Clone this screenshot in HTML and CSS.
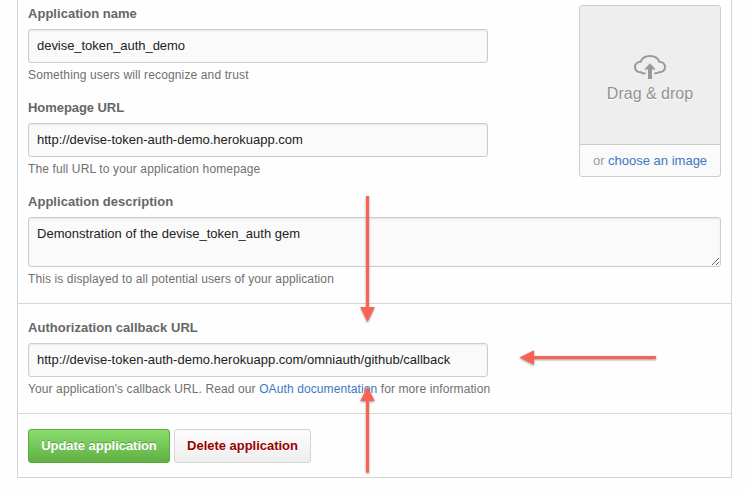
FILE: index.html
```html
<!DOCTYPE html>
<html lang="en">
<head>
<meta charset="utf-8">
<title>Application settings</title>
<link rel="stylesheet" href="styles.css">
</head>
<body>
<form class="panel">
  <section class="section details">
    <div class="top">
      <div class="fields">
        <div class="field">
          <label class="label label-name" for="name">Application name</label>
          <input class="control input-name" id="name" type="text" value="devise_token_auth_demo">
          <p class="hint hint-name">Something users will recognize and trust</p>
        </div>
        <div class="field">
          <label class="label label-home" for="home">Homepage URL</label>
          <input class="control input-home" id="home" type="text" value="http://devise-token-auth-demo.herokuapp.com">
          <p class="hint hint-home">The full URL to your application homepage</p>
        </div>
      </div>
      <div class="uploader">
        <div class="dropzone">
          <svg class="cloud" width="34" height="26" viewBox="0 0 34 26">
            <path d="M12.300 18.800C11 20 9.200 19.500 8.300 18.200C4.500 18.700 2 16.300 2 13C2 9.800 4.500 7.700 7.700 7.700C9 4.300 12.500 2 17 2C21.500 2 25 4.300 26.300 7.700C29.500 7.700 32 9.800 32 13C32 16.300 29.500 18.700 25.700 18.200C24.500 19.200 23 19.500 21.300 19.300" fill="none" stroke="#999" stroke-width="2"/>
            <path d="M17 9.300L22.800 15.500H19V25H15V15.500H11.200Z" fill="#999"/>
          </svg>
          <span class="drop-text">Drag &amp; drop</span>
        </div>
        <div class="choose"><span class="choose-text">or <a href="#">choose an image</a></span></div>
      </div>
    </div>
    <div class="field">
      <label class="label label-desc" for="desc">Application description</label>
      <textarea class="control input-desc" id="desc">Demonstration of the devise_token_auth gem</textarea>
      <p class="hint hint-desc">This is displayed to all potential users of your application</p>
    </div>
  </section>
  <section class="section callback">
    <div class="field">
      <label class="label label-callback" for="callback">Authorization callback URL</label>
      <input class="control input-callback" id="callback" type="text" value="http://devise-token-auth-demo.herokuapp.com/omniauth/github/callback">
      <p class="hint hint-callback">Your application's callback URL. Read our <a href="#">OAuth documentation</a> for more information</p>
    </div>
  </section>
  <div class="actions">
    <button class="button primary" type="button">Update application</button>
    <button class="button danger" type="button">Delete application</button>
  </div>
</form>
<svg class="arrows" width="747" height="491" viewBox="0 0 747 491">
  <path d="M366 196H369V307H374.700L367.500 322L360.300 307H366Z"/>
  <path d="M366 472.500H369V401H374.700L367.500 386.500L360.300 401H366Z"/>
  <path d="M656 356V359H534V364.700L519.500 357.500L534 350.300V356Z"/>
</svg>
</body>
</html>
```
FILE: styles.css
```css
* {
  box-sizing: border-box;
}

body {
  margin: 0;
  height: 491px;
  overflow: hidden;
  background: #fefefe;
  font-family: "Liberation Sans", Arial, sans-serif;
  font-size: 13px;
  color: #666;
}

a {
  color: #3c78c3;
  text-decoration: none;
}

.panel {
  width: 715px;
  height: 478px;
  margin-left: 17px;
  border: 1px solid #d4d4d4;
  border-top: 0;
}

.section {
  padding: 0 10px;
  border-bottom: 1px solid #d8d8d8;
}

.details {
  height: 304px;
  padding-top: 5px;
}

.callback {
  height: 110px;
  padding-top: 15px;
}

.top {
  display: flex;
  justify-content: space-between;
  height: 188px;
}

.fields {
  width: 460px;
}

.field {
  height: 94px;
}

.label {
  display: block;
  height: 24px;
  line-height: 18px;
  font-weight: bold;
  letter-spacing: 0.03px;
  white-space: nowrap;
}

.label-home {
  letter-spacing: -0.06px;
}

.control {
  display: block;
  width: 460px;
  height: 34px;
  margin: 0;
  padding: 0 8px 2px;
  border: 1px solid #ccc;
  border-radius: 3px;
  background: #fafafa;
  box-shadow: inset 0 1px 2px rgba(0, 0, 0, 0.075);
  color: #222;
  font: 13px "Liberation Sans", Arial, sans-serif;
  outline: none;
}

.input-name {
  letter-spacing: -0.04px;
}

.input-callback {
  letter-spacing: 0.01px;
}

.input-desc {
  width: 693px;
  height: 50px;
  padding-top: 7px;
  line-height: 18px;
  letter-spacing: 0.02px;
}

.hint {
  margin: 3px 0 0;
  font-size: 12px;
  line-height: 18px;
  letter-spacing: 0.107px;
  color: #707070;
  white-space: nowrap;
}

.hint-name,
.hint-home {
  letter-spacing: 0.13px;
}

.uploader {
  width: 142px;
  height: 172px;
  border: 1px solid #ccc;
  border-radius: 3px;
  background: #fafafa;
  overflow: hidden;
  text-align: center;
}

.dropzone {
  display: flex;
  flex-direction: column;
  align-items: center;
  height: 139px;
  padding-top: 48px;
  background: #eee;
  border-bottom: 1px solid #ccc;
  color: #939393;
  text-shadow: 0 1px 0 #fff;
}

.cloud {
  flex: none;
}

.drop-text {
  margin-top: 4px;
  font-size: 16px;
  line-height: 20px;
}

.choose {
  line-height: 32px;
  color: #999;
}

.actions {
  display: flex;
  gap: 4px;
  padding: 15px 10px;
}

.button {
  height: 34px;
  padding: 0 0 1px;
  border: 1px solid #d5d5d5;
  border-radius: 3px;
  font: bold 13px "Liberation Sans", Arial, sans-serif;
  white-space: nowrap;
}

.primary {
  width: 142px;
  border-color: #5ca941;
  background: linear-gradient(#8add6d, #60b044);
  color: #fff;
  letter-spacing: -0.04px;
  text-shadow: 0 -1px 0 rgba(0, 0, 0, 0.25);
}

.danger {
  width: 137px;
  background: linear-gradient(#fcfcfc, #eee);
  color: #900;
  letter-spacing: -0.02px;
  text-shadow: 0 1px 0 rgba(255, 255, 255, 0.9);
}

.arrows {
  position: absolute;
  top: 0;
  left: 0;
  fill: #fa6354;
  filter: drop-shadow(0 1px 1px rgba(0, 0, 0, 0.4));
  pointer-events: none;
}
```
